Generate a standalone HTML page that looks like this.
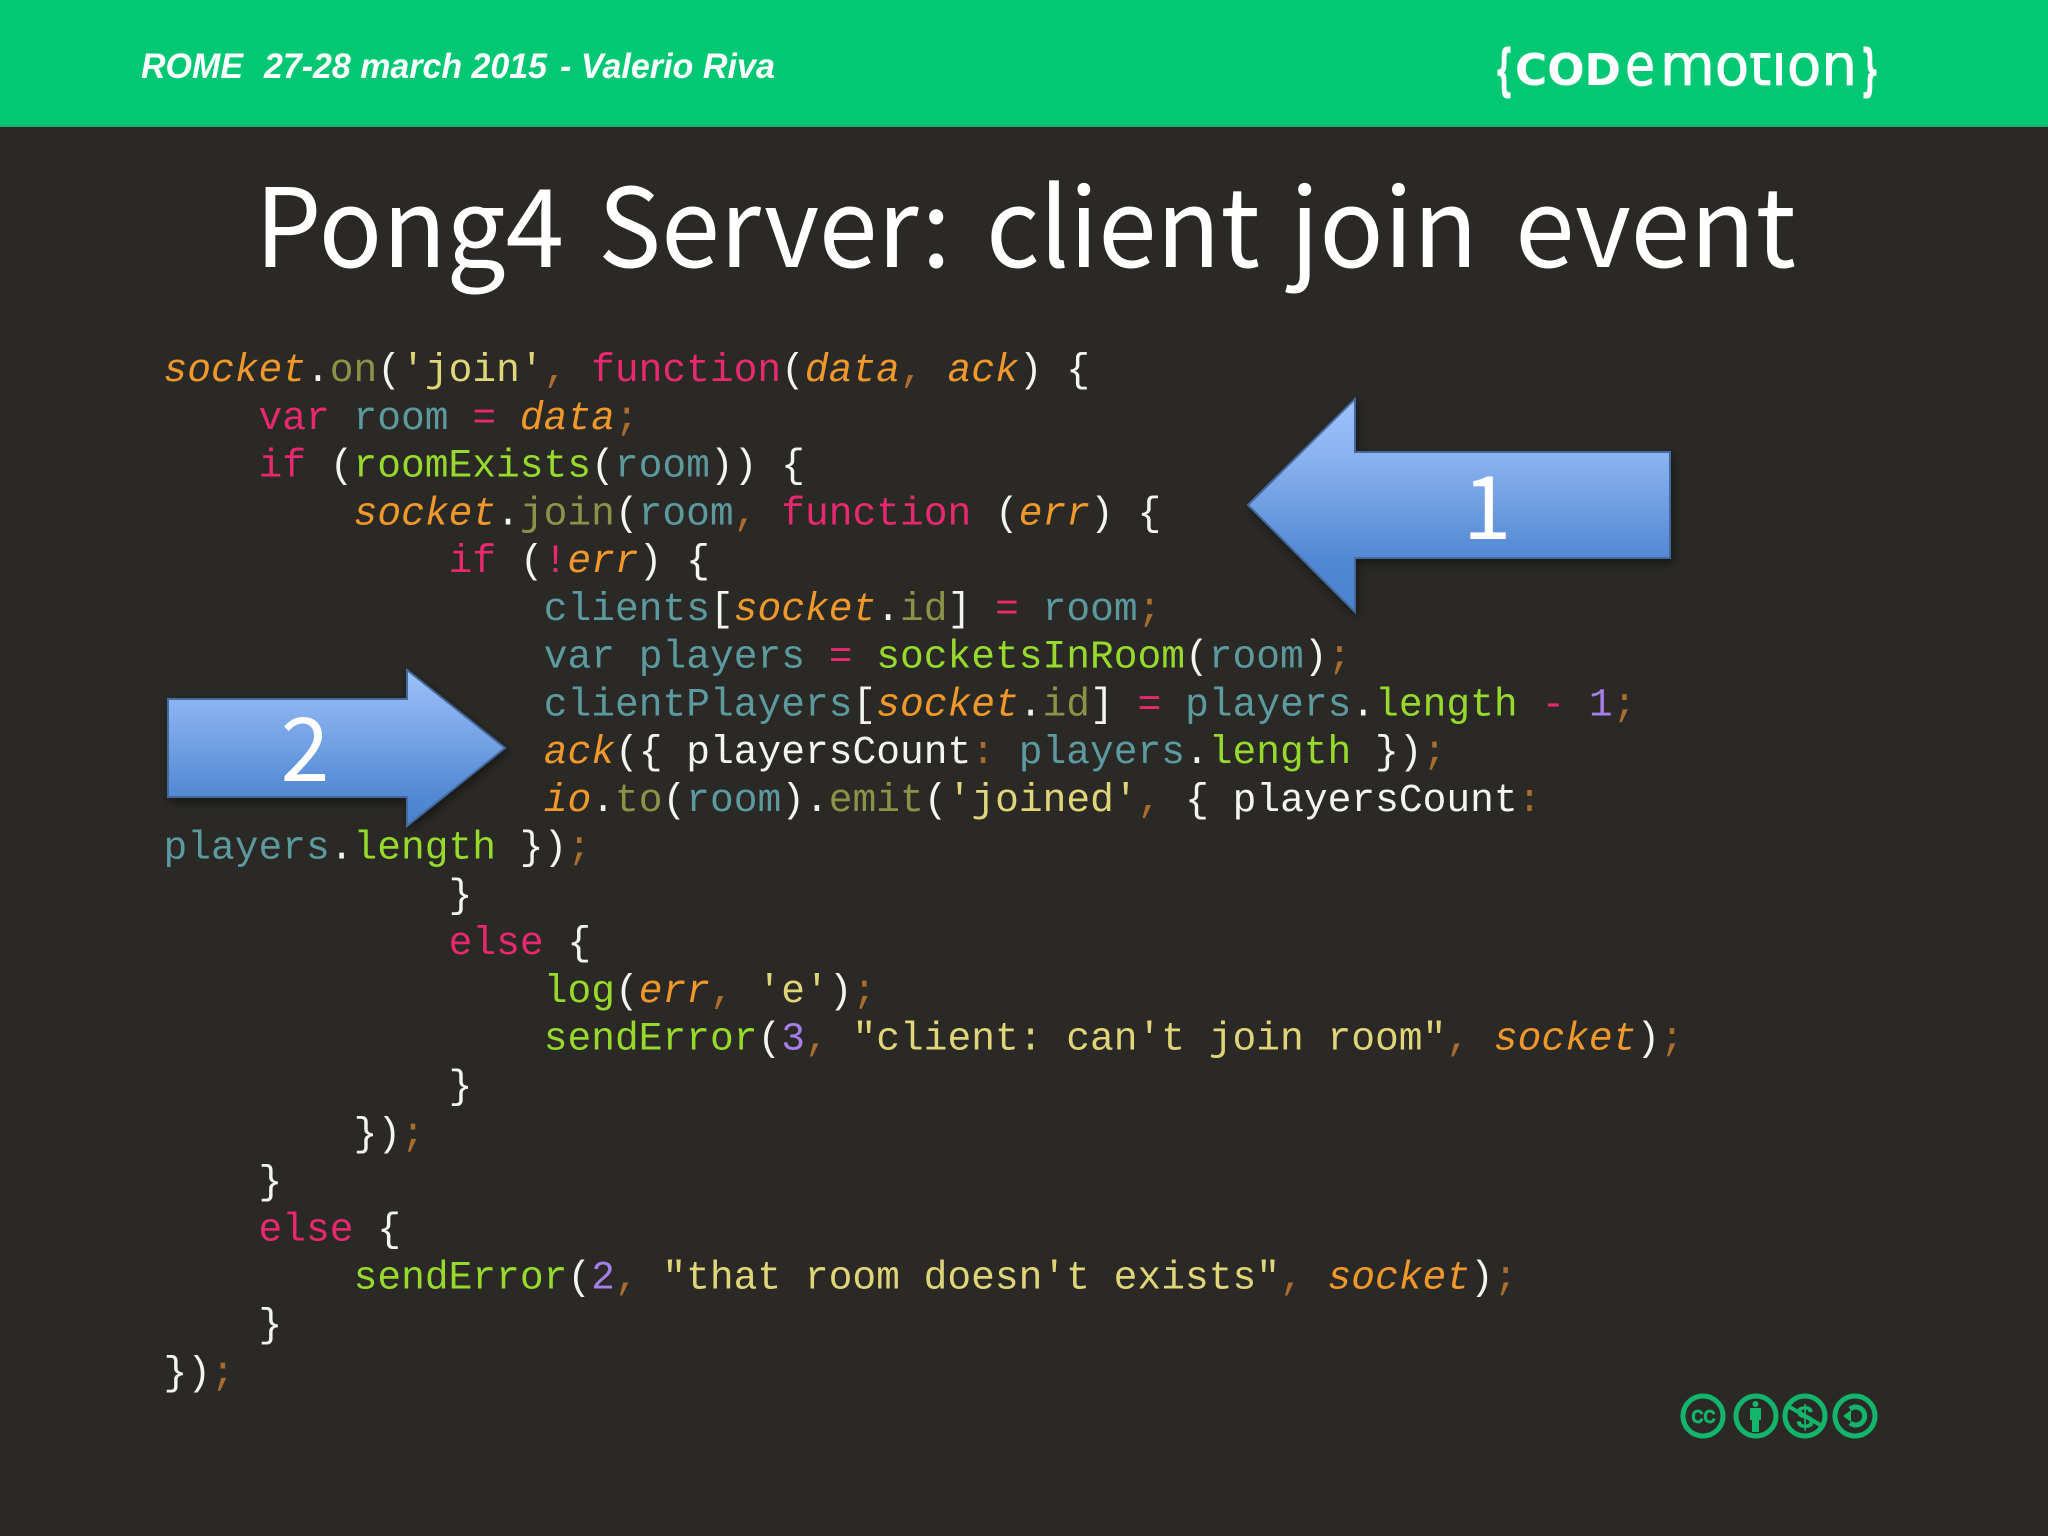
<!DOCTYPE html>
<html lang="en">
<head>
<meta charset="utf-8">
<title>Pong4 Server: client join event</title>
<style>
html,body{margin:0;padding:0;width:2048px;height:1536px;overflow:hidden;background:#2a2926}
svg{display:block;position:absolute;left:0;top:0}
text{white-space:pre}
.code text{font-family:"Liberation Mono",monospace;font-size:39.6px;fill:#f4f4f0}
.k{fill:#e8286f}.v{fill:#5c9a9e}.f{fill:#97d92c}.s{fill:#dfd679}.m{fill:#8a9449}
.o{fill:#f0982b;font-style:italic}.c{fill:#a96d30}.n{fill:#a47fe8}
.h{font-family:"Liberation Sans",sans-serif;font-weight:700;font-style:italic;font-size:35px;fill:#fff}
.t{font-family:"Noto Sans CJK JP","Liberation Sans",sans-serif;font-size:109px;fill:#fff}
.d{font-family:"Noto Sans CJK JP","Liberation Sans",sans-serif;font-size:88px;fill:#fff}
</style>
</head>
<body>
<svg width="2048" height="1536" viewBox="0 0 2048 1536" xmlns="http://www.w3.org/2000/svg">
<defs>
<linearGradient id="g1" gradientUnits="userSpaceOnUse" x1="0" y1="399" x2="0" y2="612">
<stop offset="0" stop-color="#9cc2f9"/><stop offset=".25" stop-color="#8cb4f1"/><stop offset=".75" stop-color="#5288d3"/><stop offset="1" stop-color="#4a84cc"/>
</linearGradient>
<linearGradient id="g2" gradientUnits="userSpaceOnUse" x1="0" y1="670" x2="0" y2="826">
<stop offset="0" stop-color="#9cc2f9"/><stop offset=".19" stop-color="#8cb4f1"/><stop offset=".81" stop-color="#5288d3"/><stop offset="1" stop-color="#4a84cc"/>
</linearGradient>
<filter id="sh" x="-10%" y="-15%" width="120%" height="130%">
<feDropShadow dx="2" dy="4" stdDeviation="5" flood-color="#000" flood-opacity=".45"/>
</filter>
<clipPath id="xh"><rect x="1655" y="53" width="205" height="40"/></clipPath>
</defs>

<rect width="2048" height="127" fill="#02c874"/>
<rect y="125" width="2048" height="2" fill="#0fb36c"/>
<text class="h" x="141" y="78" textLength="102" lengthAdjust="spacingAndGlyphs">ROME</text>
<text class="h" x="264" y="78" textLength="283" lengthAdjust="spacingAndGlyphs">27-28 march 2015</text>
<text class="h" x="560" y="78" textLength="215" lengthAdjust="spacingAndGlyphs">- Valerio Riva</text>

<!-- logo -->
<g font-family="'DejaVu Sans',sans-serif" fill="#fff">
<text x="1494" y="89" font-size="56" font-weight="700" textLength="20" lengthAdjust="spacingAndGlyphs">{</text>
<text x="1515" y="85" font-size="44" font-weight="700" textLength="106" lengthAdjust="spacingAndGlyphs">COD</text>
<text x="1625" y="85" font-size="58" font-weight="400" textLength="30" lengthAdjust="spacingAndGlyphs" stroke="#fff" stroke-width=".8">e</text>
<text x="1660" y="85" font-size="58" font-weight="400" textLength="197" lengthAdjust="spacingAndGlyphs" clip-path="url(#xh)" stroke="#fff" stroke-width=".8">motion</text>
<text x="1860" y="89" font-size="56" font-weight="700" textLength="20" lengthAdjust="spacingAndGlyphs">}</text>
</g>

<!-- title -->
<text class="t" x="255" y="267" textLength="309" lengthAdjust="spacingAndGlyphs">Pong4</text>
<text class="t" x="598" y="267" textLength="353" lengthAdjust="spacingAndGlyphs">Server:</text>
<text class="t" x="986" y="267" textLength="274" lengthAdjust="spacingAndGlyphs">client</text>
<text class="t" x="1290" y="267" textLength="188" lengthAdjust="spacingAndGlyphs">join</text>
<text class="t" x="1515" y="267" textLength="281" lengthAdjust="spacingAndGlyphs">event</text>

<!-- code -->
<g class="code">
<text x="163.5" y="381"><tspan class="o">socket</tspan>.<tspan class="m">on</tspan>(<tspan class="s">'join'</tspan><tspan class="c">,</tspan> <tspan class="k">function</tspan>(<tspan class="o">data</tspan><tspan class="c">,</tspan> <tspan class="o">ack</tspan>) {</text>
<text x="258.5" y="428.75"><tspan class="k">var</tspan> <tspan class="v">room</tspan> <tspan class="k">=</tspan> <tspan class="o">data</tspan><tspan class="c">;</tspan></text>
<text x="258.5" y="476.5"><tspan class="k">if</tspan> (<tspan class="f">roomExists</tspan>(<tspan class="v">room</tspan>)) {</text>
<text x="353.6" y="524.25"><tspan class="o">socket</tspan>.<tspan class="m">join</tspan>(<tspan class="v">room</tspan><tspan class="c">,</tspan> <tspan class="k">function</tspan> (<tspan class="o">err</tspan>) {</text>
<text x="448.6" y="572"><tspan class="k">if</tspan> (<tspan class="k">!</tspan><tspan class="o">err</tspan>) {</text>
<text x="543.7" y="619.75"><tspan class="v">clients</tspan>[<tspan class="o">socket</tspan>.<tspan class="m">id</tspan>] <tspan class="k">=</tspan> <tspan class="v">room</tspan><tspan class="c">;</tspan></text>
<text x="543.7" y="667.5"><tspan class="v">var players</tspan> <tspan class="k">=</tspan> <tspan class="f">socketsInRoom</tspan>(<tspan class="v">room</tspan>)<tspan class="c">;</tspan></text>
<text x="543.7" y="715.25"><tspan class="v">clientPlayers</tspan>[<tspan class="o">socket</tspan>.<tspan class="m">id</tspan>] <tspan class="k">=</tspan> <tspan class="v">players</tspan>.<tspan class="f">length</tspan> <tspan class="k">-</tspan> <tspan class="n">1</tspan><tspan class="c">;</tspan></text>
<text x="543.7" y="763"><tspan class="o">ack</tspan>({ playersCount<tspan class="c">:</tspan> <tspan class="v">players</tspan>.<tspan class="f">length</tspan> })<tspan class="c">;</tspan></text>
<text x="543.7" y="810.75"><tspan class="o">io</tspan>.<tspan class="m">to</tspan>(<tspan class="v">room</tspan>).<tspan class="m">emit</tspan>(<tspan class="s">'joined'</tspan><tspan class="c">,</tspan> { playersCount<tspan class="c">:</tspan></text>
<text x="163.5" y="858.5"><tspan class="v">players</tspan>.<tspan class="f">length</tspan> })<tspan class="c">;</tspan></text>
<text x="448.6" y="906.25">}</text>
<text x="448.6" y="954"><tspan class="k">else</tspan> {</text>
<text x="543.7" y="1001.75"><tspan class="f">log</tspan>(<tspan class="o">err</tspan><tspan class="c">,</tspan> <tspan class="s">'e'</tspan>)<tspan class="c">;</tspan></text>
<text x="543.7" y="1049.5"><tspan class="f">sendError</tspan>(<tspan class="n">3</tspan><tspan class="c">,</tspan> <tspan class="s">"client: can't join room"</tspan><tspan class="c">,</tspan> <tspan class="o">socket</tspan>)<tspan class="c">;</tspan></text>
<text x="448.6" y="1097.25">}</text>
<text x="353.6" y="1145">})<tspan class="c">;</tspan></text>
<text x="258.5" y="1192.75">}</text>
<text x="258.5" y="1240.5"><tspan class="k">else</tspan> {</text>
<text x="353.6" y="1288.25"><tspan class="f">sendError</tspan>(<tspan class="n">2</tspan><tspan class="c">,</tspan> <tspan class="s">"that room doesn't exists"</tspan><tspan class="c">,</tspan> <tspan class="o">socket</tspan>)<tspan class="c">;</tspan></text>
<text x="258.5" y="1336">}</text>
<text x="163.5" y="1383.75">})<tspan class="c">;</tspan></text>
</g>

<!-- arrow 1 -->
<path d="M1248 505L1355 399V452H1670V558H1355V612Z" fill="url(#g1)" stroke="#44699c" stroke-width="2" filter="url(#sh)"/>
<text class="d" x="1487" y="539" text-anchor="middle">1</text>

<!-- arrow 2 -->
<path d="M168 699H407V670L505 748L407 826V797H168Z" fill="url(#g2)" stroke="#44699c" stroke-width="2" filter="url(#sh)"/>
<text class="d" x="305" y="781" text-anchor="middle">2</text>

<!-- cc badges -->
<g fill="none" stroke="#12b56b" stroke-width="5">
<circle cx="1703" cy="1416" r="20"/>
<circle cx="1756" cy="1416" r="20"/>
<circle cx="1805" cy="1416" r="20"/>
<circle cx="1855" cy="1416" r="20"/>
<path d="M1788 1406L1822 1426" stroke-width="4"/>
<path d="M1850 1409a9 9 0 1 1 0 14" stroke-width="5"/>
</g>
<text x="1703.500" y="1423" text-anchor="middle" font-family="'Liberation Sans',sans-serif" font-weight="700" font-size="18" fill="#12b56b" stroke="#12b56b" stroke-width=".8" textLength="24" lengthAdjust="spacingAndGlyphs">CC</text>
<g fill="#12b56b">
<circle cx="1755.500" cy="1404" r="3"/>
<path d="M1750 1408H1761V1420H1759V1432H1752V1420H1750Z"/>
<path d="M1843 1416L1851 1410V1422Z"/>
</g>
<text x="1805" y="1428" text-anchor="middle" font-family="'Liberation Sans',sans-serif" font-weight="700" font-size="32" fill="#12b56b">$</text>
</svg>
</body>
</html>
